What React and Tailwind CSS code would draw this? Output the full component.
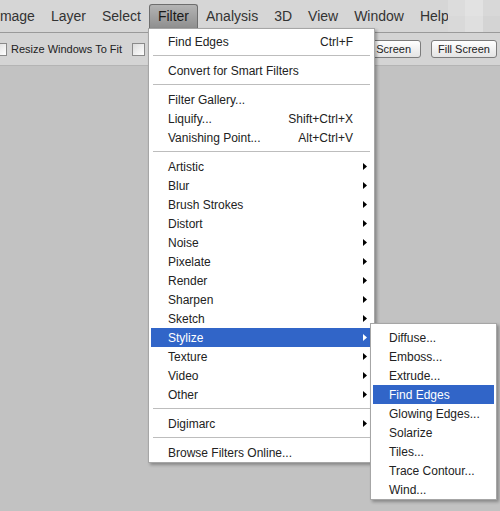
import React from 'react';

const menuBar = ['Image', 'Layer', 'Select', 'Filter', 'Analysis', '3D', 'View', 'Window', 'Help'];

const filterItems = [
  { label: 'Find Edges', shortcut: 'Ctrl+F' },
  { sep: true },
  { label: 'Convert for Smart Filters' },
  { sep: true },
  { label: 'Filter Gallery...' },
  { label: 'Liquify...', shortcut: 'Shift+Ctrl+X' },
  { label: 'Vanishing Point...', shortcut: 'Alt+Ctrl+V' },
  { sep: true },
  { label: 'Artistic', sub: true },
  { label: 'Blur', sub: true },
  { label: 'Brush Strokes', sub: true },
  { label: 'Distort', sub: true },
  { label: 'Noise', sub: true },
  { label: 'Pixelate', sub: true },
  { label: 'Render', sub: true },
  { label: 'Sharpen', sub: true },
  { label: 'Sketch', sub: true },
  { label: 'Stylize', sub: true, active: true },
  { label: 'Texture', sub: true },
  { label: 'Video', sub: true },
  { label: 'Other', sub: true },
  { sep: true },
  { label: 'Digimarc', sub: true },
  { sep: true },
  { label: 'Browse Filters Online...' },
];

const stylizeItems = [
  'Diffuse...',
  'Emboss...',
  'Extrude...',
  'Find Edges',
  'Glowing Edges...',
  'Solarize',
  'Tiles...',
  'Trace Contour...',
  'Wind...',
];

const Arrow = ({ active }) => (
  <svg width="4" height="7" viewBox="0 0 4 7" className="ml-auto mr-[5px]">
    <path d="M0 0L4 3.5L0 7Z" fill={active ? '#ffffff' : '#000000'} />
  </svg>
);

const Checkbox = ({ className = '' }) => (
  <div className={`w-[13px] h-[13px] border border-[#8a8a8a] bg-gradient-to-br from-[#dcdcdc] to-white shrink-0 ${className}`} />
);

export default function App() {
  return (
    <div className="relative w-[500px] h-[511px] overflow-hidden bg-[#c2c2c2] font-['Liberation_Sans',Arial,sans-serif]">
      {/* menu bar */}
      <div className="h-[33px] bg-[#d6d6d6] border-b border-[#9a9a9a] flex pt-[4px] text-[14px] text-[#333]">
        {menuBar.map((m, i) => (
          <div
            key={m}
            className={`h-[24px] px-[8px] flex items-center whitespace-nowrap shrink-0 ${i === 0 ? 'ml-[-12px]' : ''} ${
              m === 'Filter'
                ? 'bg-gradient-to-b from-[#b4b4b4] to-[#8f8f8f] border border-b-0 border-[#6e6e6e] rounded-t-[3px] text-[#1a1a1a]'
                : ''
            }`}
          >
            {m}
          </div>
        ))}
      </div>

      {/* blurred corner */}
      <div className="absolute left-[448px] top-0 w-[52px] h-[32px] grid grid-cols-3">
        <div className="bg-[#dcdcdc]" />
        <div className="bg-[#e2e2e2]" />
        <div className="bg-[#d8d8d8]" />
        <div className="bg-[#d9d9d9]" />
        <div className="bg-[#dfdfdf]" />
        <div className="bg-[#d4d4d4]" />
      </div>

      {/* options bar */}
      <div className="h-[33px] bg-[#d4d4d4] border-b border-[#b4b4b4] flex items-center text-[11px] text-[#222]">
        <Checkbox className="ml-[-6px]" />
        <span className="ml-[4px] whitespace-nowrap">Resize Windows To Fit</span>
        <Checkbox className="ml-[10px]" />
        <div className="ml-auto flex gap-[10px] mr-[3px]">
          <div className="w-[70px] h-[18px] flex items-center justify-center rounded-[3px] border border-[#7c7c7c] bg-gradient-to-b from-white to-[#e4e4e4] whitespace-nowrap">
            Fit Screen
          </div>
          <div className="w-[66px] h-[18px] flex items-center justify-center rounded-[3px] border border-[#7c7c7c] bg-gradient-to-b from-white to-[#e4e4e4] whitespace-nowrap">
            Fill Screen
          </div>
        </div>
      </div>

      {/* Filter menu */}
      <div className="absolute left-[148px] top-[28px] w-[227px] bg-white border border-[#a6a6a6] shadow-[2px_2px_3px_rgba(0,0,0,0.3)] pt-[3px] text-[12px] text-[#222]">
        {filterItems.map((it, i) =>
          it.sep ? (
            <div key={i} className="h-[10px] flex flex-col justify-center mx-[4px]">
              <div className="border-t border-[#bdbdbd] border-b border-b-white" />
            </div>
          ) : (
            <div
              key={i}
              className={`h-[19px] mx-[2px] pl-[17px] flex items-center whitespace-nowrap ${
                it.active ? 'bg-[#3165c8] text-white' : ''
              }`}
            >
              <span>{it.label}</span>
              {it.shortcut && <span className="ml-auto mr-[19px]">{it.shortcut}</span>}
              {it.sub && <Arrow active={it.active} />}
            </div>
          )
        )}
      </div>

      {/* Stylize submenu */}
      <div className="absolute left-[370px] top-[323px] w-[127px] bg-white border border-[#a6a6a6] shadow-[2px_2px_3px_rgba(0,0,0,0.3)] pt-[4px] text-[12px] text-[#222]">
        {stylizeItems.map((s) => (
          <div
            key={s}
            className={`h-[19px] mx-[2px] pl-[16px] flex items-center whitespace-nowrap ${
              s === 'Find Edges' ? 'bg-[#3165c8] text-white' : ''
            }`}
          >
            {s}
          </div>
        ))}
      </div>
    </div>
  );
}
